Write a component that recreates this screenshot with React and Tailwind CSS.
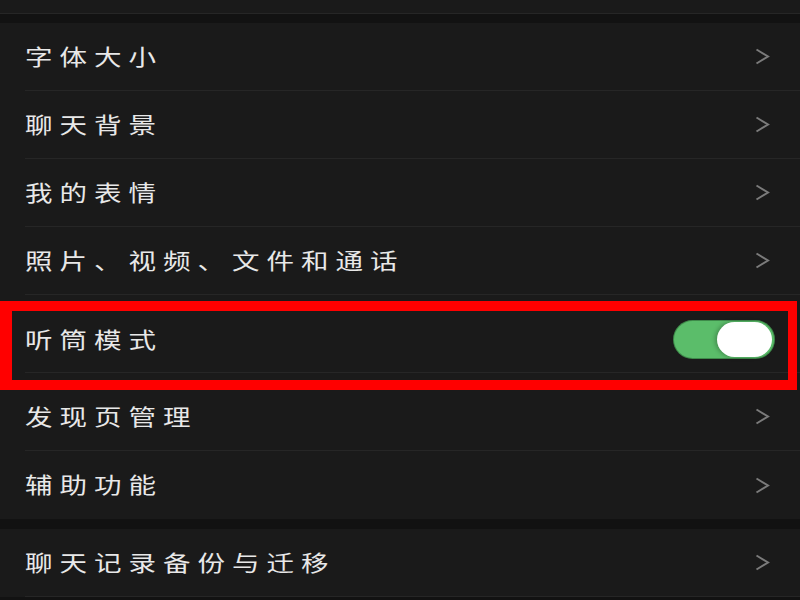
import React from "react";

const font = { fontFamily: '"Noto Sans CJK SC", "Noto Sans", sans-serif' };

function Chevron() {
  return (
    <svg width="15" height="17" viewBox="0 0 15 17" className="shrink-0">
      <polyline points="1.5,1.5 13,8.5 1.5,15.5" fill="none" stroke="#7b7b7b" strokeWidth="2" strokeLinejoin="miter" />
    </svg>
  );
}

function Label({ children }) {
  return (
    <span className="inline-block origin-left -translate-y-[2px] scale-x-[1.25] text-[22px] leading-none tracking-[5.6px] text-[#e8e8e8]">
      {children}
    </span>
  );
}

function Row({ label, last }) {
  return (
    <div className="bg-[#1a1a1a] pl-[25px]">
      <div className={`flex h-[68px] items-center justify-between pr-[30px] ${last ? "" : "border-b border-[#262626]"}`}>
        <Label>{label}</Label>
        <Chevron />
      </div>
    </div>
  );
}

function Toggle() {
  return (
    <div className="relative h-[37px] w-[100px] rounded-full bg-[#5bbd6a] shadow-[0_0_0_1px_#3e8a4a]">
      <div className="absolute right-[2px] top-[1px] h-[35px] w-[55px] rounded-full bg-white shadow-[-2px_0_4px_rgba(0,0,0,0.25)]" />
    </div>
  );
}

export default function App() {
  return (
    <div className="h-[600px] w-[800px] overflow-hidden bg-[#121212]" style={font}>
      <div className="h-[14px] border-b border-[#262626] bg-[#1a1a1a]" />
      <div className="h-[9px] bg-[#121212]" />
      <Row label="字体大小" />
      <Row label="聊天背景" />
      <Row label="我的表情" />
      <Row label="照片、视频、文件和通话" />
      <div className="relative bg-[#1a1a1a]">
        <div className="pl-[25px]">
          <div className="flex h-[78px] items-center justify-between border-b border-[#262626] pr-[26px] pt-[12px]">
            <Label>听筒模式</Label>
            <Toggle />
          </div>
        </div>
        <div className="h-[10px]" />
        <div className="pointer-events-none absolute left-0 top-[6px] h-[89px] w-[797px] border-y-[10px] border-l-[12px] border-r-[9px] border-[#ff0000]" />
      </div>
      <Row label="发现页管理" />
      <Row label="辅助功能" last />
      <div className="h-[10px] bg-[#121212]" />
      <Row label="聊天记录备份与迁移" />
    </div>
  );
}
